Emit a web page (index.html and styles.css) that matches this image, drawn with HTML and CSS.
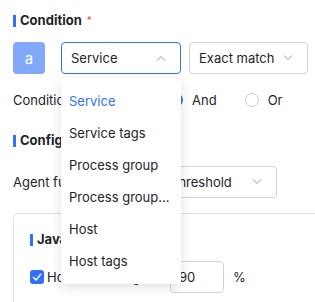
FILE: index.html
```html
<!DOCTYPE html>
<html lang="en">

<head>
    <meta charset="UTF-8">
    <title>Condition</title>
    <link rel="stylesheet" href="styles.css">
</head>

<body>
    <h3 class="title">Condition <span class="req">*</span></h3>

    <div class="row cond-row">
        <div class="avatar">a</div>
        <div class="select-wrap">
            <div class="select open">
                <span>Service</span>
                <svg class="chev" width="10" height="6" viewBox="0 0 10 6"><path d="M1 5.5L5 1.5L9 5.5" fill="none" stroke="#8f959e" stroke-width="1"/></svg>
            </div>
            <ul class="dropdown">
                <li class="active">Service</li>
                <li>Service tags</li>
                <li>Process group</li>
                <li>Process group name</li>
                <li>Host</li>
                <li>Host tags</li>
            </ul>
        </div>
        <div class="select match">
            <span>Exact match</span>
            <svg class="chev" width="10" height="6" viewBox="0 0 10 6"><path d="M1 0.5L5 4.5L9 0.5" fill="none" stroke="#8f959e" stroke-width="1"/></svg>
        </div>
    </div>

    <div class="row logic-row">
        <span class="label">Condition logic</span>
        <label class="radio"><span class="dot checked"></span>And</label>
        <label class="radio"><span class="dot"></span>Or</label>
    </div>

    <h3 class="title config">Configuration</h3>

    <div class="row agent-row">
        <span class="label">Agent full GC</span>
        <div class="select thr">
            <span>Threshold</span>
            <svg class="chev" width="10" height="6" viewBox="0 0 10 6"><path d="M1 0.5L5 4.5L9 0.5" fill="none" stroke="#8f959e" stroke-width="1"/></svg>
        </div>
    </div>

    <div class="card">
        <h3 class="title">Java heap</h3>
        <div class="row check-row">
            <label class="check">
                <span class="box"><svg width="10" height="8" viewBox="0 0 10 8"><path d="M1 4L4 7L9 1" fill="none" stroke="#fff" stroke-width="1.4"/></svg></span>
                Host CPU usage
            </label>
            <div class="num">90</div>
            <span class="unit">%</span>
        </div>
    </div>
</body>

</html>
```

FILE: styles.css
```css
* {
    box-sizing: border-box;
    margin: 0;
    padding: 0;
}

html {
    overflow: hidden;
}

body {
    font-family: 'Inter', 'Noto Sans', sans-serif;
    font-size: 13px;
    color: #1f2329;
    background: #fff;
    padding: 9px 0 0 13px;
    overflow: hidden;
    width: 315px;
    height: 302px;
}

.title {
    height: 22px;
    line-height: 22px;
    font-size: 13px;
    font-weight: 700;
    padding-left: 7px;
    display: flex;
    align-items: center;
    position: relative;
}

.title::before {
    content: '';
    position: absolute;
    left: 0;
    top: 6px;
    width: 3px;
    height: 12px;
    background: #3370ff;
}

.req {
    color: #f54a45;
    font-weight: 400;
    font-size: 10px;
    margin-left: 5px;
}

.row {
    display: flex;
    align-items: center;
}

.cond-row {
    margin-top: 11px;
    height: 32px;
}

.avatar {
    width: 32px;
    height: 32px;
    border-radius: 4px;
    background: #82a8f8;
    color: #fff;
    font-size: 15px;
    display: flex;
    align-items: center;
    justify-content: center;
    margin-right: 16px;
    flex-shrink: 0;
}

.select-wrap {
    position: relative;
    margin-right: 8px;
}

.select {
    height: 32px;
    width: 120px;
    border: 1px solid #d0d3d6;
    border-radius: 4px;
    display: flex;
    align-items: center;
    justify-content: space-between;
    padding: 0 14px 0 9px;
    background: #fff;
    flex-shrink: 0;
}

.select.open {
    border-color: #3370ff;
}

.select.match {
    width: 119px;
}

.dropdown {
    position: absolute;
    top: 36px;
    left: 0;
    width: 120px;
    background: #fff;
    border-radius: 4px;
    box-shadow: 0 3px 12px rgba(31, 35, 41, 0.14);
    list-style: none;
    padding: 7px 0;
    z-index: 10;
}

.dropdown li {
    height: 32px;
    line-height: 32px;
    padding: 0 8px;
    white-space: nowrap;
    overflow: hidden;
    text-overflow: ellipsis;
}

.dropdown li.active {
    color: #3370ff;
}

.logic-row {
    margin-top: 15px;
    height: 22px;
}

.label {
    white-space: nowrap;
    flex-shrink: 0;
}

.logic-row .label {
    width: 156px;
}

.radio {
    display: flex;
    align-items: center;
    margin-right: 28px;
}

.dot {
    width: 14px;
    height: 14px;
    border: 1px solid #c9cdd4;
    border-radius: 50%;
    margin-right: 9px;
}

.dot.checked {
    border: 4px solid #3370ff;
}

.config {
    margin-top: 18px;
}

.agent-row {
    margin-top: 15px;
    height: 32px;
}

.agent-row .label {
    width: 147px;
}

.select.thr {
    width: 117px;
}

.card {
    margin-top: 15px;
    width: 400px;
    height: 120px;
    border: 1px solid #dee0e3;
    border-radius: 4px;
    padding: 14px 16px;
}

.check-row {
    margin-top: 11px;
    height: 32px;
}

.check {
    display: flex;
    align-items: center;
    width: 140px;
    white-space: nowrap;
}

.box {
    width: 14px;
    height: 14px;
    background: #3370ff;
    border-radius: 3px;
    display: flex;
    align-items: center;
    justify-content: center;
    margin-right: 3px;
}

.num {
    width: 54px;
    height: 32px;
    border: 1px solid #d0d3d6;
    border-radius: 4px;
    line-height: 30px;
    padding-left: 8px;
}

.unit {
    margin-left: 9px;
}
```
